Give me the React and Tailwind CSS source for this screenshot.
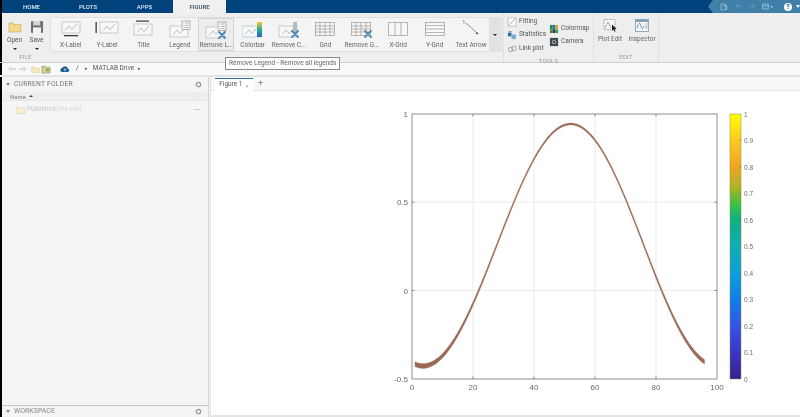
import React from "react";

const Chart = () => (
  <g fill="none" strokeWidth="0.8">
    <rect x="1" y="1" width="18" height="11" fill="#f8f8f8" stroke="#b7c1c8" />
    <path d="M4 9.500 L8 5 L11 8.500 L16 3" stroke="#a3aeb6" />
  </g>
);

const XLabel = () => (
  <svg width="20" height="20" viewBox="0 -1 20 20"><Chart /><rect x="3" y="14" width="14" height="1.300" fill="#3a3a3a" /></svg>
);
const YLabel = () => (
  <svg width="24" height="20" viewBox="-4 -1 24 20"><Chart /><rect x="-3.500" y="1" width="1.300" height="11" fill="#3a3a3a" /></svg>
);
const TitleIcon = () => (
  <svg width="20" height="20" viewBox="0 -3 20 20"><Chart /><rect x="3" y="-2.500" width="13" height="1.200" fill="#3a3a3a" /></svg>
);
const ListMini = ({ x = 13, y = 0 }) => (
  <g transform={`translate(${x} ${y})`}>
    <rect x="0" y="0" width="8" height="8.500" fill="#fff" stroke="#808080" strokeWidth="0.6" />
    <path d="M1.500 2h1M3.500 2h3M1.500 4.300h1M3.500 4.300h3M1.500 6.600h1M3.500 6.600h3" stroke="#666" strokeWidth="0.6" />
  </g>
);
const Cross = ({ x, y }) => (
  <g transform={`translate(${x} ${y})`} stroke="#4b86b3" strokeWidth="1.800" strokeLinecap="round">
    <path d="M0 0 L6 6 M6 0 L0 6" />
  </g>
);
const LegendIcon = () => (
  <svg width="22" height="20" viewBox="0 -2 22 20"><g transform="translate(0 3)"><Chart /></g><ListMini x="13" y="-1" /></svg>
);
const RemoveLegendIcon = () => (
  <svg width="22" height="20" viewBox="0 -2 22 20"><g transform="translate(0 3)"><Chart /></g><ListMini x="13" y="-1" /><Cross x="14" y="9" /></svg>
);
const ColorbarIcon = () => (
  <svg width="22" height="20" viewBox="0 -2 22 20">
    <defs><linearGradient id="cb1" x1="0" y1="1" x2="0" y2="0"><stop offset="0" stopColor="#2d63c8" /><stop offset="0.45" stopColor="#21a59a" /><stop offset="1" stopColor="#f6c92e" /></linearGradient></defs>
    <g transform="translate(-1 3)"><Chart /></g><rect x="15" y="0" width="5" height="15" fill="url(#cb1)" />
  </svg>
);
const RemoveColorbarIcon = () => (
  <svg width="22" height="20" viewBox="0 -2 22 20"><g transform="translate(0 3)"><Chart /></g><rect x="15" y="0" width="4" height="12" fill="#b6bdc2" /><Cross x="14" y="9" /></svg>
);
const GridBase = ({ v = [], h = [] }) => (
  <g fill="none" stroke="#9a9a9a" strokeWidth="0.7">
    <rect x="0.500" y="0.500" width="19" height="13" fill="#f8f8f8" />
    {v.map((x) => <path key={"v" + x} d={`M${x} 0.500V13.500`} />)}
    {h.map((y) => <path key={"h" + y} d={`M0.500 ${y}H19.500`} />)}
  </g>
);
const GridIcon = () => <svg width="20" height="20" viewBox="0 -2 20 20"><GridBase v={[5, 10, 15]} h={[4, 7, 10]} /></svg>;
const RemoveGridIcon = () => <svg width="21" height="20" viewBox="0 -2 21 20"><GridBase v={[5, 10, 15]} h={[4, 7, 10]} /><Cross x="14" y="9" /></svg>;
const XGridIcon = () => <svg width="20" height="20" viewBox="0 -2 20 20"><GridBase v={[7, 13]} /></svg>;
const YGridIcon = () => <svg width="20" height="20" viewBox="0 -2 20 20"><GridBase h={[3.500, 7, 10.500]} /></svg>;
const ArrowIcon = () => (
  <svg width="20" height="20" viewBox="0 1 20 20">
    <path d="M5 4 L17 15" stroke="#666" strokeWidth="0.700" />
    <path d="M17.500 15.500 L14.500 14.500 L16 13 Z" fill="#444" />
    <path d="M2 1.500h1V5" stroke="#666" strokeWidth="0.600" fill="none" />
  </svg>
);
const Folder = ({ s = 14, fill = "#f2d78a", stroke = "#c9a653" }) => (
  <svg width={s} height={s} viewBox="0 0 14 14">
    <path d="M1 3h4l1 1.500h7V12H1Z" fill={fill} stroke={stroke} strokeWidth="0.600" />
  </svg>
);
const SaveIcon = () => (
  <svg width="14" height="14" viewBox="0 0 14 14">
    <rect x="1" y="1" width="12" height="12" rx="1" fill="#6c7175" />
    <rect x="3.200" y="1" width="7" height="4.400" fill="#d4d6d8" />
    <rect x="3" y="7.400" width="8" height="5.600" fill="#f3f3f3" />
  </svg>
);
const Caret = () => <div className="w-0 h-0 border-l-[2px] border-r-[2px] border-t-[2.500px] border-l-transparent border-r-transparent border-t-[#222]" />;

const Gallery = [
  ["X-Label", XLabel],
  ["Y-Label", YLabel],
  ["Title", TitleIcon],
  ["Legend", LegendIcon],
  ["Remove L...", RemoveLegendIcon, true],
  ["Colorbar", ColorbarIcon],
  ["Remove C...", RemoveColorbarIcon],
  ["Grid", GridIcon],
  ["Remove G...", RemoveGridIcon],
  ["X-Grid", XGridIcon],
  ["Y-Grid", YGridIcon],
  ["Text Arrow", ArrowIcon],
];

const SectionLabel = ({ children }) => (
  <div className="h-[10px] text-[6px] leading-[10px] text-center text-[#999] tracking-[0.2px]">{children}</div>
);

const ToolRow = ({ icon, label }) => (
  <div className="flex items-center gap-[2px] h-[13.500px] text-[6.500px] text-[#555] whitespace-nowrap">
    {icon}
    <span>{label}</span>
  </div>
);

const ToolIcon = ({ children, s = 10 }) => (
  <svg width={s} height={s} viewBox="0 0 11 11">{children}</svg>
);

const Quick = () => (
  <div className="ml-auto w-[92px] h-[13px] bg-[#3f7fa8] [clip-path:polygon(5px_0,100%_0,100%_100%,5px_100%,0_50%)] flex items-center pl-[12px] gap-[7px]">
    <svg width="8" height="8" viewBox="0 0 8 8"><path d="M1 1h5v6H1Z" fill="none" stroke="#a9c7da" strokeWidth="0.800" /><path d="M3 3h4v4" stroke="#a9c7da" strokeWidth="0.800" fill="none" /></svg>
    <svg width="7" height="7" viewBox="0 0 7 7"><path d="M6 6V3H1.500M3 1L1 3l2 2" fill="none" stroke="#6f9dbb" strokeWidth="0.800" /></svg>
    <svg width="7" height="7" viewBox="0 0 7 7"><path d="M1 6V3h4.500M4 1l2 2-2 2" fill="none" stroke="#6f9dbb" strokeWidth="0.800" /></svg>
    <svg width="12" height="7" viewBox="0 0 12 7"><path d="M0.500 1h6v5h-6ZM0.500 3h6" fill="none" stroke="#a9c7da" strokeWidth="0.800" /><path d="M8.500 3h3L10 5Z" fill="#a9c7da" /></svg>
    <div className="ml-[3px] w-[8px] h-[8px] rounded-full bg-white text-[#1f5e8a] text-[7px] leading-[8px] text-center font-bold">?</div>
    <div className="-ml-[3px] w-0 h-0 border-l-[2px] border-r-[2px] border-t-[3px] border-l-transparent border-r-transparent border-t-white" />
  </div>
);

const px = (d) => 412 + 3.05 * d;
const py = (v) => 291.5 - 176.7 * v;

// the family of lines in the plot: a cosine wave, spread wider towards the ends
const PEAK = 570.7;
const curveY = (x) => 246 - 121 * Math.cos(((x - PEAK) * Math.PI) / (x < PEAK ? 147.7 : 146));
const spread = (x) => 1.9 + 3 * Math.min(1, Math.abs(x - PEAK) / 150);
const band = () => {
  const xs = [];
  for (let x = 415; x <= 704.5; x += 1.5) xs.push(x);
  const up = xs.map((x) => `${x} ${(curveY(x) - spread(x) / 2).toFixed(2)}`);
  const lo = xs.slice().reverse().map((x) => `${x} ${(curveY(x) + spread(x) / 2).toFixed(2)}`);
  return `M${up.join(" L")} L${lo.join(" L")} Z`;
};

const Plot = () => (
  <svg width="589" height="323" viewBox="211 92 589 323" className="block">
    <defs>
      <linearGradient id="parula" x1="0" y1="1" x2="0" y2="0">
        <stop offset="0" stopColor="#35228f" />
        <stop offset="0.1" stopColor="#3c34c4" />
        <stop offset="0.2" stopColor="#3753e6" />
        <stop offset="0.3" stopColor="#0f7fe8" />
        <stop offset="0.4" stopColor="#0d9fdc" />
        <stop offset="0.5" stopColor="#0eaeb4" />
        <stop offset="0.6" stopColor="#0eb083" />
        <stop offset="0.66" stopColor="#3fc04a" />
        <stop offset="0.72" stopColor="#a9b524" />
        <stop offset="0.8" stopColor="#f0a424" />
        <stop offset="0.9" stopColor="#fdca1f" />
        <stop offset="1" stopColor="#ffff00" />
      </linearGradient>
    </defs>
    {[20, 40, 60, 80].map((d) => <path key={d} d={`M${px(d)} 115V380`} stroke="#e6e6e6" strokeWidth="0.800" />)}
    {[0.5, 0].map((v) => <path key={v} d={`M412 ${py(v)}H717`} stroke="#e6e6e6" strokeWidth="0.800" />)}
    <rect x="412" y="115" width="305" height="265" fill="none" stroke="#8d8d8d" strokeWidth="1" />
    {[20, 40, 60, 80].map((d) => <path key={d} d={`M${px(d)} 115v2.500M${px(d)} 380v-2.500`} stroke="#666" strokeWidth="0.700" />)}
    {[0.5, 0].map((v) => <path key={v} d={`M412 ${py(v)}h2.500M717 ${py(v)}h-2.500`} stroke="#666" strokeWidth="0.700" />)}
    <path d={band()} fill="#9c6b58" stroke="#9c6b58" strokeWidth="0.300" />
    <g fontSize="8" fill="#6a6a6a" fontFamily="'Liberation Sans', sans-serif">
      {[0, 20, 40, 60, 80, 100].map((d) => <text key={d} x={px(d)} y="391" textAnchor="middle">{d}</text>)}
      {[[1, "1"], [0.5, "0.5"], [0, "0"], [-0.5, "-0.5"]].map(([v, t]) => <text key={t} x="408" y={py(v) + 3} textAnchor="end">{t}</text>)}
    </g>
    <rect x="730" y="115" width="11" height="265" fill="url(#parula)" stroke="#8a8a4a" strokeWidth="0.500" />
    {[1, 2, 3, 4, 5, 6, 7, 8, 9].map((i) => <path key={i} d={`M741 ${380 - i * 26.5}h-1.500`} stroke="#444" strokeWidth="0.500" />)}
    <g fontSize="6.500" fill="#6a6a6a" fontFamily="'Liberation Sans', sans-serif">
      {["0", "0.1", "0.2", "0.3", "0.4", "0.5", "0.6", "0.7", "0.8", "0.9", "1"].map((t, i) => (
        <text key={t} x="744" y={380 - i * 26.5 + 2.5}>{t}</text>
      ))}
    </g>
  </svg>
);

export default function App() {
  return (
    <div className="relative w-[800px] h-[417px] overflow-hidden bg-white blur-[0.3px] font-['Roboto','Liberation_Sans',sans-serif]">
      {/* Tab bar */}
      <div className="flex h-[13px] bg-[#00427c] text-[6px] font-medium text-[#dfe8ef]">
        <div className="w-[2px] bg-black" />
        <div className="w-[58px] text-center leading-[13px] pl-[1px]">HOME</div>
        <div className="w-[56px] text-center leading-[13px]">PLOTS</div>
        <div className="w-[57px] text-center leading-[13px]">APPS</div>
        <div className="w-[53px] text-center leading-[13px] bg-[#f0f0f0] text-[#33475a]">FIGURE</div>
        <Quick />
      </div>

      {/* Ribbon */}
      <div className="flex h-[50px] bg-[#eeeeee] border-b border-[#cfcfcf]">
        <div className="w-[2px] bg-black" />
        {/* File */}
        <div className="w-[47px] flex flex-col justify-between pt-[7px]">
          <div className="flex justify-center gap-[7px] text-[6.500px] leading-[9px] text-[#555]">
            <div className="flex flex-col items-center w-[15px]">
              <Folder />
              <span className="mt-[2px]">Open</span>
              <div className="mt-[3px]"><Caret /></div>
            </div>
            <div className="flex flex-col items-center w-[15px]">
              <SaveIcon />
              <span className="mt-[2px]">Save</span>
              <div className="mt-[3px]"><Caret /></div>
            </div>
          </div>
          <SectionLabel>FILE</SectionLabel>
        </div>

        {/* Gallery */}
        <div className="w-[453px] pt-[4px] pl-[1px]">
          <div className="flex h-[35px] border border-[#e0e0e0] bg-[#f4f4f4] rounded-[1px]">
            <div className="flex flex-1 pl-[1.500px]">
              {Gallery.map(([label, Icon, active]) => (
                <div
                  key={label}
                  className={`w-[36.400px] shrink-0 flex flex-col items-center justify-between pt-[2px] pb-[1.500px] text-[6.500px] leading-[9px] text-[#666] whitespace-nowrap ${active ? "bg-[#ededed] border border-[#d2d2d2] rounded-[1px]" : ""}`}
                >
                  <div className="h-[20px] flex items-center justify-center"><Icon /></div>
                  <span>{label}</span>
                </div>
              ))}
            </div>
            <div className="w-[12px] bg-[#e2e2e2] flex items-center justify-center"><Caret /></div>
          </div>
        </div>

        {/* Tools */}
        <div className="w-[90px] flex flex-col justify-between border-l border-[#e0e0e0] ml-[1px] pt-[2px]">
          <div className="flex pl-[3px] gap-[3px]">
            <div className="flex flex-col w-[39px]">
              <ToolRow label="Fitting" icon={<ToolIcon><rect x="1" y="1" width="9" height="9" fill="#fafafa" stroke="#aaa" strokeWidth="0.700" /><path d="M2 9L9 2" stroke="#c98272" strokeWidth="0.800" /></ToolIcon>} />
              <ToolRow label="Statistics" icon={<ToolIcon><rect x="1" y="3" width="4" height="4" fill="#2e6f9e" /><rect x="5" y="5" width="5" height="5" fill="#7ba8c6" /><path d="M2 2h3" stroke="#555" /></ToolIcon>} />
              <ToolRow label="Link plot" icon={<ToolIcon><circle cx="4" cy="6" r="2.500" fill="none" stroke="#888" strokeWidth="0.800" /><circle cx="7.500" cy="5" r="2.500" fill="none" stroke="#6a9ab8" strokeWidth="0.800" /></ToolIcon>} />
            </div>
            <div className="flex flex-col pt-[7px] w-[44px]">
              <ToolRow label="Colormap" icon={<ToolIcon><rect x="1" y="1" width="3" height="5" fill="#1f8a6a" /><rect x="4" y="1" width="3" height="5" fill="#2b6bb0" /><rect x="7" y="1" width="3" height="5" fill="#d9a42c" /><rect x="1" y="6" width="3" height="4" fill="#6a7d2a" /><rect x="4" y="6" width="3" height="4" fill="#23405f" /><rect x="7" y="6" width="3" height="4" fill="#3a9a5a" /></ToolIcon>} />
              <ToolRow label="Camera" icon={<ToolIcon><rect x="1" y="1" width="9" height="9" fill="#3f4a54" /><circle cx="5.500" cy="5.500" r="2.300" fill="#aab3ba" /><circle cx="5.500" cy="5.500" r="1.100" fill="#222" /></ToolIcon>} />
            </div>
          </div>
          <SectionLabel>TOOLS</SectionLabel>
        </div>

        {/* Edit */}
        <div className="w-[66px] flex flex-col justify-between border-l border-r border-[#e0e0e0] pt-[5px]">
          <div className="flex text-[6.500px] leading-[9px] text-[#666]">
            <div className="w-[32px] flex flex-col items-center">
              <svg width="16" height="15" viewBox="0 0 16 15">
                <rect x="2" y="1.500" width="11" height="10" fill="#f8f8f8" stroke="#6e8390" strokeWidth="0.700" strokeDasharray="1.500 1" />
                <path d="M3 10L6 4l3 6" fill="none" stroke="#7b8a94" strokeWidth="0.700" />
                <path d="M10 6.500l0 6.500 1.500-1.500 1.200 2.300 1-.5-1.200-2.200h2.200Z" fill="#222" />
              </svg>
              <span className="mt-[2px]">Plot Edit</span>
            </div>
            <div className="w-[32px] flex flex-col items-center">
              <svg width="16" height="15" viewBox="0 0 16 15">
                <rect x="1.500" y="1.500" width="13" height="12" fill="#f7f7f7" stroke="#7e97a8" strokeWidth="0.800" />
                <rect x="1.500" y="1.500" width="13" height="2.500" fill="#7fa4bb" />
                <path d="M3 10c2-6 3-6 4-2s2 3 3 0" fill="none" stroke="#4f7e9c" strokeWidth="0.800" />
                <path d="M11.500 6h2M11.500 8h2M11.500 10h2" stroke="#666" strokeWidth="0.600" />
              </svg>
              <span className="mt-[2px]">Inspector</span>
            </div>
          </div>
          <SectionLabel>EDIT</SectionLabel>
        </div>
      </div>

      {/* Address bar */}
      <div className="flex items-center h-[14px] bg-[#f9f9f9] border-b-2 border-[#e4e4e4] text-[6.500px] text-[#555]">
        <div className="w-[2px] h-full bg-black" />
        <div className="flex items-center pl-[5px] gap-[1px]">
          <svg width="10" height="8" viewBox="0 0 10 8"><path d="M1 4l3.500-3v2H9v2H4.500v2Z" fill="#d6dee4" /></svg>
          <svg width="10" height="8" viewBox="0 0 10 8"><path d="M9 4L5.500 1v2H1v2h4.500v2Z" fill="#d6dee4" /></svg>
        </div>
        <div className="ml-[3px]"><Folder s={9} fill="#f5e6b8" stroke="#d8c386" /></div>
        <svg className="ml-[1px]" width="10" height="10" viewBox="0 0 11 11"><path d="M1 2.500h4l1 1h4V10H1Z" fill="#ddcf8e" stroke="#7f9a5e" strokeWidth="0.700" /><path d="M5 5h4v3H5Z" fill="#8aad66" /></svg>
        <svg className="ml-[9px]" width="10" height="8" viewBox="0 0 10 8"><path d="M2.500 7a2 2 0 0 1-.3-4 3 3 0 0 1 5.700.5A1.800 1.800 0 0 1 7.800 7Z" fill="#1c5f8f" /><path d="M5 6.500V4M3.800 5l1.200-1.300L6.200 5" stroke="#fff" strokeWidth="0.600" fill="none" /></svg>
        <span className="ml-[6px]">/</span>
        <span className="ml-[6px] text-[5px]">▸</span>
        <span className="ml-[5px]">MATLAB Drive</span>
        <span className="ml-[4px] text-[5px]">▸</span>
      </div>

      {/* Main */}
      <div className="flex h-[340px]">
        <div className="w-[2px] bg-black" />
        {/* Left panel */}
        <div className="w-[207px] flex flex-col bg-[#f5f5f5] border-r border-[#d6d6d6]">
          <div className="h-[15px] flex items-center pl-[4px] pr-[6px] text-[6.800px] text-[#777] tracking-[0.2px]">
            <div className="w-0 h-0 border-l-[2.500px] border-r-[2.500px] border-t-[3px] border-l-transparent border-r-transparent border-t-[#888]" />
            <span className="ml-[4px]">CURRENT FOLDER</span>
            <svg className="ml-auto" width="7" height="7" viewBox="0 0 7 7"><circle cx="3.500" cy="3.500" r="2.200" fill="none" stroke="#999" strokeWidth="1.300" /></svg>
          </div>
          <div className="h-[9px] flex items-center bg-[#efefef] border-b border-[#e6e6e6] pl-[8px] text-[6px] font-medium text-[#8f8f8f]">
            <span>Name</span>
            <div className="ml-[3px] w-0 h-0 border-l-[2px] border-r-[2px] border-b-[2px] border-l-transparent border-r-transparent border-b-[#444]" />
            <div className="ml-auto mr-[10px] h-full border-l border-[#e2e2e2]" />
          </div>
          <div className="h-[15px] mt-[1px] flex items-center pl-[14px] pr-[8px] text-[6.500px] text-[#c8c8c8]">
            <Folder s={10} fill="#f6eed6" stroke="#dcc99a" />
            <span className="ml-[1px]">Published</span>
            <span className="ml-[1px] text-[#d8d8d8]">(my aile)</span>
            <div className="ml-auto w-[6px] h-[1px] bg-[#cfcfcf]" />
          </div>
          <div className="flex-1" />
          <div className="h-[12px] flex items-center border-t border-[#c9c9c9] pl-[4px] pr-[6px] text-[7px] text-[#888]">
            <div className="w-0 h-0 border-l-[2.500px] border-r-[2.500px] border-t-[3px] border-l-transparent border-r-transparent border-t-[#888]" />
            <span className="ml-[4px]">WORKSPACE</span>
            <svg className="ml-auto" width="7" height="7" viewBox="0 0 7 7"><circle cx="3.500" cy="3.500" r="2.200" fill="none" stroke="#999" strokeWidth="1.300" /></svg>
          </div>
        </div>
        <div className="w-[1px] bg-[#f2f2f2]" />

        {/* Figure area */}
        <div className="flex-1 flex flex-col min-w-0 border-l border-b-2 border-[#e4e4e4]">
          <div className="h-[14px] flex items-end bg-[#f8f8f8] border-b border-[#e4e4e4] pl-[4px] text-[6.500px] text-[#555]">
            <div className="w-[38px] h-[13px] flex items-center justify-center gap-[3px] bg-white border-t-[1.500px] border-[#2d6f9f] -mb-[1px]">
              <span>Figure 1</span>
              <span className="text-[#999] text-[6px]">×</span>
            </div>
            <span className="ml-[5px] h-[13px] leading-[12px] text-[#888] text-[9px]">+</span>
          </div>
          <Plot />
        </div>
      </div>

      {/* Tooltip */}
      <div className="absolute left-[225px] top-[57px] h-[13px] px-[3px] flex items-center bg-white border border-[#8c8c8c] text-[6.500px] text-[#666] whitespace-nowrap">
        Remove Legend - Remove all legends
      </div>
    </div>
  );
}
